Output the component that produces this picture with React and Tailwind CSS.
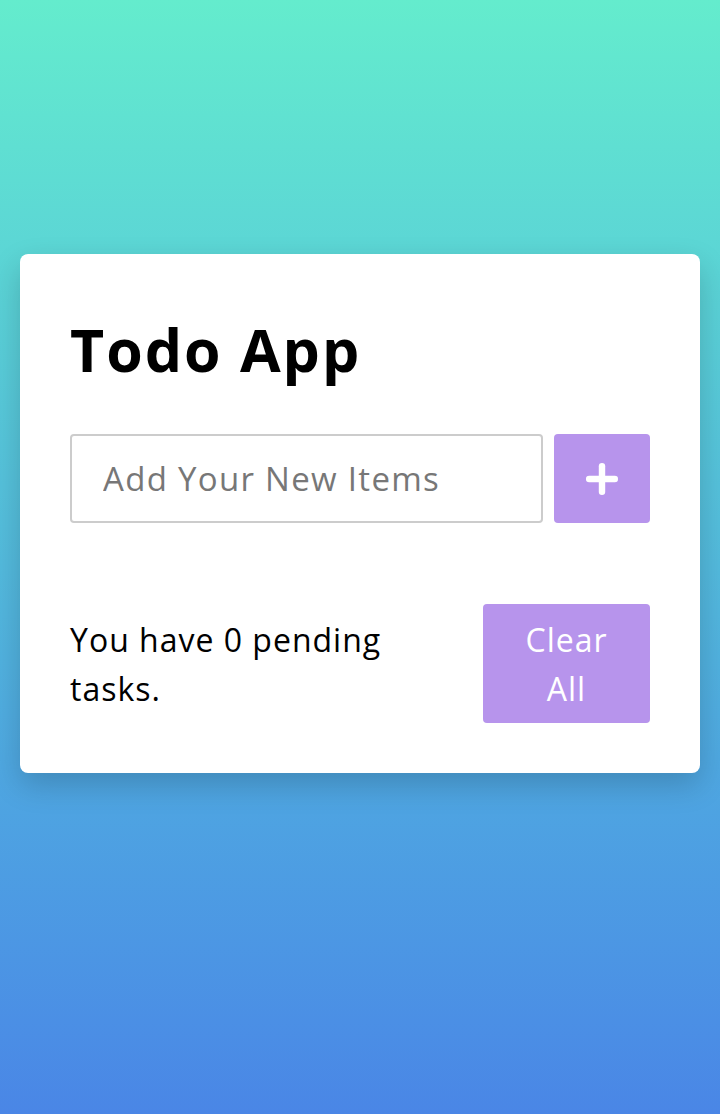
import { Plus } from "lucide-react";

export default function App() {
  return (
    <main className="min-h-screen bg-gradient-to-b from-[#64eccd] to-[#4a86e6] px-5 pt-[254px] font-['Open_Sans',sans-serif]">
      <div className="rounded-lg bg-white px-[50px] pb-[50px] pt-[58px] shadow-[0_12px_30px_rgba(0,0,0,0.18)]">
        <h1 className="text-[59px] font-bold leading-[74px] tracking-[2px] text-black">Todo App</h1>
        <div className="mt-[48px] flex gap-[11px]">
          <input
            type="text"
            placeholder="Add Your New Items"
            className="h-[89px] min-w-0 flex-1 rounded border-2 border-[#cccccc] bg-white px-[31px] text-[33px] tracking-[1.3px] text-black outline-none placeholder:text-[#777777]"
          />
          <button className="grid h-[89px] w-[96px] place-items-center rounded bg-[#b794ec] text-white">
            <Plus size={44} strokeWidth={3.5} />
          </button>
        </div>
        <div className="mt-[81px] flex items-center justify-between">
          <p className="w-[360px] text-[32px] leading-[49px] tracking-[1px] text-black">
            You have 0 pending tasks.
          </p>
          <button className="h-[119px] w-[167px] rounded bg-[#b794ec] px-8 text-[32px] leading-[49px] tracking-[1px] text-white">
            Clear All
          </button>
        </div>
      </div>
    </main>
  );
}
